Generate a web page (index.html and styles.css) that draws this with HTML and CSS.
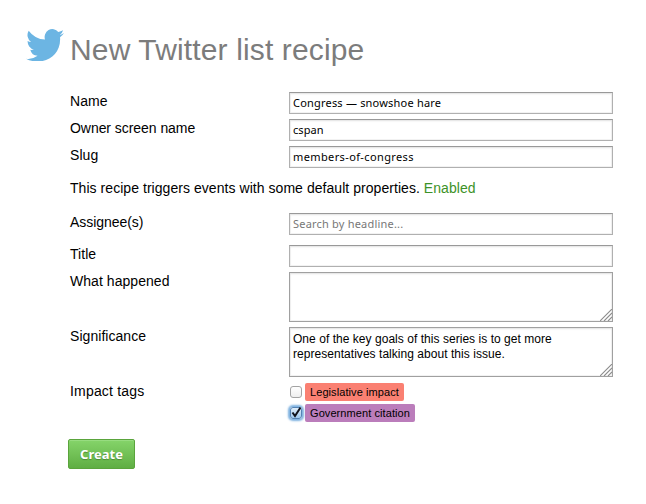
FILE: index.html
```html
<!DOCTYPE html>
<html lang="en">
<head>
<meta charset="utf-8">
<title>New Twitter list recipe</title>
<link rel="stylesheet" href="styles.css">
</head>
<body>
<header class="heading">
  <svg class="bird" viewBox="0 2 24 19.6" preserveAspectRatio="none"><path d="M24 4.4a10 10 0 0 1-2.7 1.2 5 5 0 0 0 2.1-2.9 9 9 0 0 1-3 1.1 4.9 4.9 0 0 0-8.4 4.7A14 14 0 0 1 1.7 3a5.2 5.2 0 0 0 1.5 7A5 5 0 0 1 1 9.3a5.2 5.2 0 0 0 4 5.3 5 5 0 0 1-2.3.1 4.9 4.9 0 0 0 4.6 3.7A9.9 9.9 0 0 1 0 20.2C9.500 25 22.500 19.500 21.500 7.100A10 10 0 0 0 24 4.400z"/></svg>
  <h1>New Twitter list recipe</h1>
</header>
<form class="form">
  <div class="row"><label>Name</label><input type="text" value="Congress — snowshoe hare"></div>
  <div class="row"><label class="tight">Owner screen name</label><input class="plain" type="text" value="cspan"></div>
  <div class="row"><label>Slug</label><input class="wide" type="text" value="members-of-congress"></div>
  <p class="note">This recipe triggers events with some default properties. <a>Enabled</a></p>
  <div class="row assign"><label class="tight">Assignee(s)</label><input type="text" placeholder="Search by headline..."></div>
  <div class="row"><label>Title</label><input type="text"></div>
  <div class="row"><label>What happened</label><div class="area"><textarea></textarea><svg class="grip" viewBox="0 0 12 12"><path d="M0 12L12 0M4 12L12 4M8 12L12 8"/></svg></div></div>
  <div class="row"><label>Significance</label><div class="area"><textarea>One of the key goals of this series is to get more
representatives talking about this issue.</textarea><svg class="grip" viewBox="0 0 12 12"><path d="M0 12L12 0M4 12L12 4M8 12L12 8"/></svg></div></div>
  <div class="row"><label class="loose">Impact tags</label>
    <div class="tags">
      <div class="tag"><span class="box"></span><span class="pill red">Legislative impact</span></div>
      <div class="tag"><span class="box on"><svg viewBox="0 0 12 12"><path d="M2.500 5.500L5 9L10.500 .5"/></svg></span><span class="pill purple">Government citation</span></div>
    </div>
  </div>
  <button type="button" class="create">Create</button>
</form>
</body>
</html>
```
FILE: styles.css
```css
* { box-sizing: border-box; }
body {
  margin: 0;
  background: #fff;
  color: #000;
  font: 14px/18px "Liberation Sans", Arial, sans-serif;
  letter-spacing: .05px;
}
.heading {
  display: flex;
  height: 92px;
  padding: 29px 0 0 26px;
}
.bird { width: 38px; height: 32px; fill: #6cb5e3; }
h1 {
  margin: 3px 0 0 6px;
  font-size: 30px;
  line-height: 36px;
  font-weight: normal;
  letter-spacing: .14px;
  color: #7c7c7c;
  white-space: nowrap;
}
.form { width: 543px; margin-left: 70px; }
.row {
  display: grid;
  grid-template-columns: 219px 324px;
  align-items: start;
  margin-bottom: 5px;
}
.tight { letter-spacing: -.05px; }
.loose { letter-spacing: .18px; }
input, textarea {
  display: block;
  width: 324px;
  margin: 0;
  border: 1px solid #b0b0b0;
  border-top-color: #999;
  border-radius: 0;
  outline: 0;
  background: #fff;
  box-shadow: inset 0 1px 2px #e4e4e4, inset 0 0 0 1px #f3f3f3;
  color: #000;
}
input {
  height: 22px;
  padding: 0 3px 1px;
  font: 11px "Noto Sans", sans-serif;
  letter-spacing: .2px;
}
input.plain { letter-spacing: .05px; }
input.wide { letter-spacing: .38px; }
input::placeholder { color: #777; opacity: 1; }
textarea {
  height: 50px;
  padding: 4px 3px;
  border-color: #a0a0a0;
  font: 12px/15px "Liberation Sans", Arial, sans-serif;
  letter-spacing: .04px;
  resize: none;
  overflow: hidden;
}
.area { position: relative; }
.grip {
  position: absolute;
  right: 1px;
  bottom: 1px;
  width: 12px;
  height: 12px;
  fill: none;
  stroke: #8c8c8c;
  stroke-width: 1.1;
}
.note { margin: 11px 0 16px; line-height: 18px; white-space: nowrap; }
.note a { color: #3d9228; }
.assign { margin-bottom: 10px; }
.tags { display: grid; gap: 3px; padding-top: 1px; }
.tag { display: flex; height: 18px; align-items: center; }
.box {
  width: 12px;
  height: 12px;
  margin: 0 3px 0 1px;
  border: 1px solid #a3a3a3;
  border-radius: 3px;
  background: linear-gradient(#fff, #eee);
}
.box.on {
  border-color: #5583b4;
  background: linear-gradient(#e0edf9, #9fc9ef);
  box-shadow: 0 0 2px 2px #7fb2e0;
}
.box svg {
  display: block;
  width: 12px;
  height: 12px;
  margin: -1px;
  overflow: visible;
  fill: none;
  stroke: #10131c;
  stroke-width: 2;
}
.pill {
  height: 18px;
  padding: 0 5px;
  border-radius: 2px;
  font-size: 11px;
  line-height: 19px;
  letter-spacing: .08px;
  white-space: nowrap;
}
.red { width: 99px; background: #fa8072; }
.purple { width: 110px; background: #bb7dbb; }
.create {
  display: block;
  width: 67px;
  height: 30px;
  margin: 17px 0 0 -2px;
  padding: 0;
  border: 1px solid #5aa43c;
  border-radius: 2px;
  background: linear-gradient(#85d46a, #5fae43);
  box-shadow: inset 0 1px 0 #97dc80;
  color: #fff;
  font: bold 13px "Noto Sans", sans-serif;
  text-shadow: 0 1px 1px #4c8a35;
}
```
